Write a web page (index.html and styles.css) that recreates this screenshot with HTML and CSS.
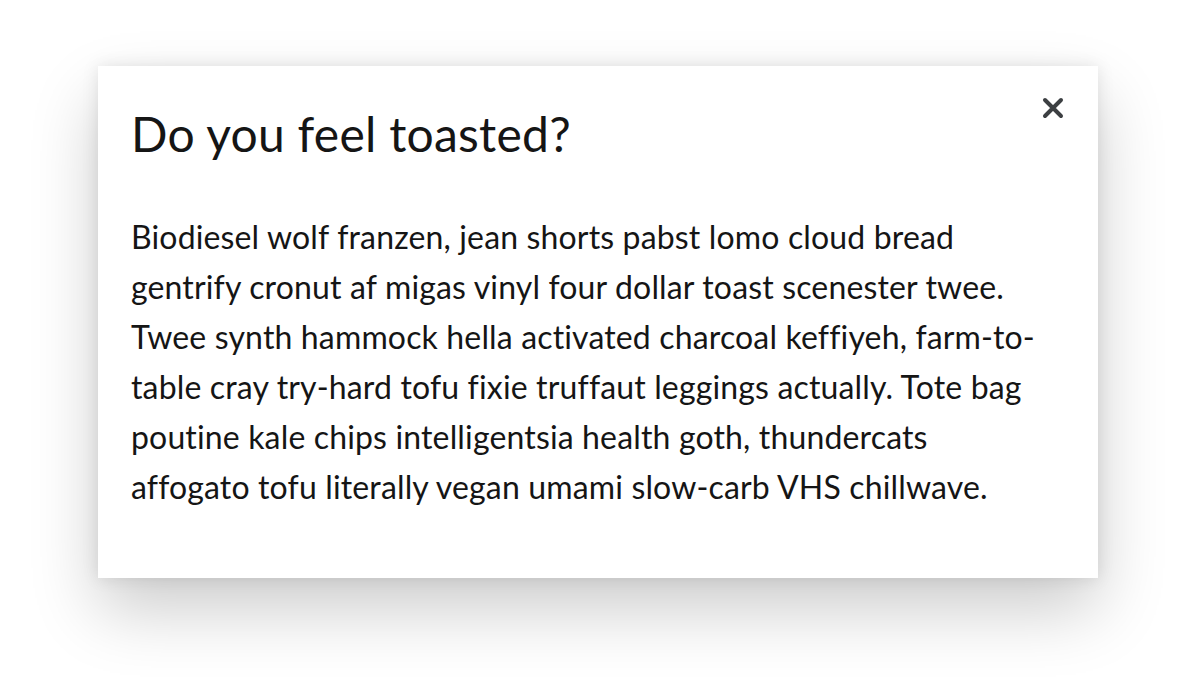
FILE: index.html
```html
<!DOCTYPE html>
<html lang="en">
<head>
<meta charset="utf-8">
<title>Do you feel toasted?</title>
<link rel="stylesheet" href="styles.css">
</head>
<body>
<div class="stage">
  <section class="modal" role="dialog" aria-labelledby="modal-title">
    <button class="close" type="button" aria-label="Close">
      <svg width="22" height="22" viewBox="0 0 22 22" aria-hidden="true">
        <path d="M3 3 L19 19 M19 3 L3 19" stroke="#3c3f42" stroke-width="4" stroke-linecap="round" fill="none"/>
      </svg>
    </button>
    <h1 class="title" id="modal-title">Do you feel toasted?</h1>
    <p class="body-text">Biodiesel wolf franzen, jean shorts pabst lomo cloud bread<br>gentrify cronut af migas vinyl four dollar toast scenester twee.<br>Twee synth hammock hella activated charcoal keffiyeh, farm-to-<br>table cray try-hard tofu fixie truffaut leggings actually. Tote bag<br>poutine kale chips intelligentsia health goth, thundercats<br>affogato tofu literally vegan umami slow-carb VHS chillwave.</p>
  </section>
</div>
</body>
</html>
```
FILE: styles.css
```css
html, body {
  margin: 0;
  padding: 0;
  background: #ffffff;
}

body {
  font-family: "Lato", "Open Sans", "Liberation Sans", sans-serif;
  color: #151515;
  font-variant-ligatures: none;
}

.stage {
  display: flex;
  justify-content: flex-start;
  padding: 66px 0 0 98px;
  height: 694px;
  box-sizing: border-box;
}

.modal {
  position: relative;
  width: 1000px;
  height: 512px;
  box-sizing: border-box;
  background: #ffffff;
  padding: 39px 33px 0 33px;
  box-shadow: 0 32px 64px rgba(3, 3, 3, 0.2), 0 0 16px rgba(3, 3, 3, 0.1);
}

.title {
  margin: 0;
  font-size: 48px;
  line-height: 1.2;
  font-weight: 400;
  letter-spacing: 0.25px;
  color: #151515;
}

.body-text {
  margin: 49px 0 0 0;
  font-size: 32px;
  line-height: 50px;
  font-weight: 400;
  letter-spacing: 0.15px;
  color: #151515;
  white-space: nowrap;
}

.close {
  position: absolute;
  top: 31px;
  right: 34px;
  width: 22px;
  height: 22px;
  padding: 0;
  border: 0;
  background: transparent;
  display: flex;
  cursor: pointer;
}
```
